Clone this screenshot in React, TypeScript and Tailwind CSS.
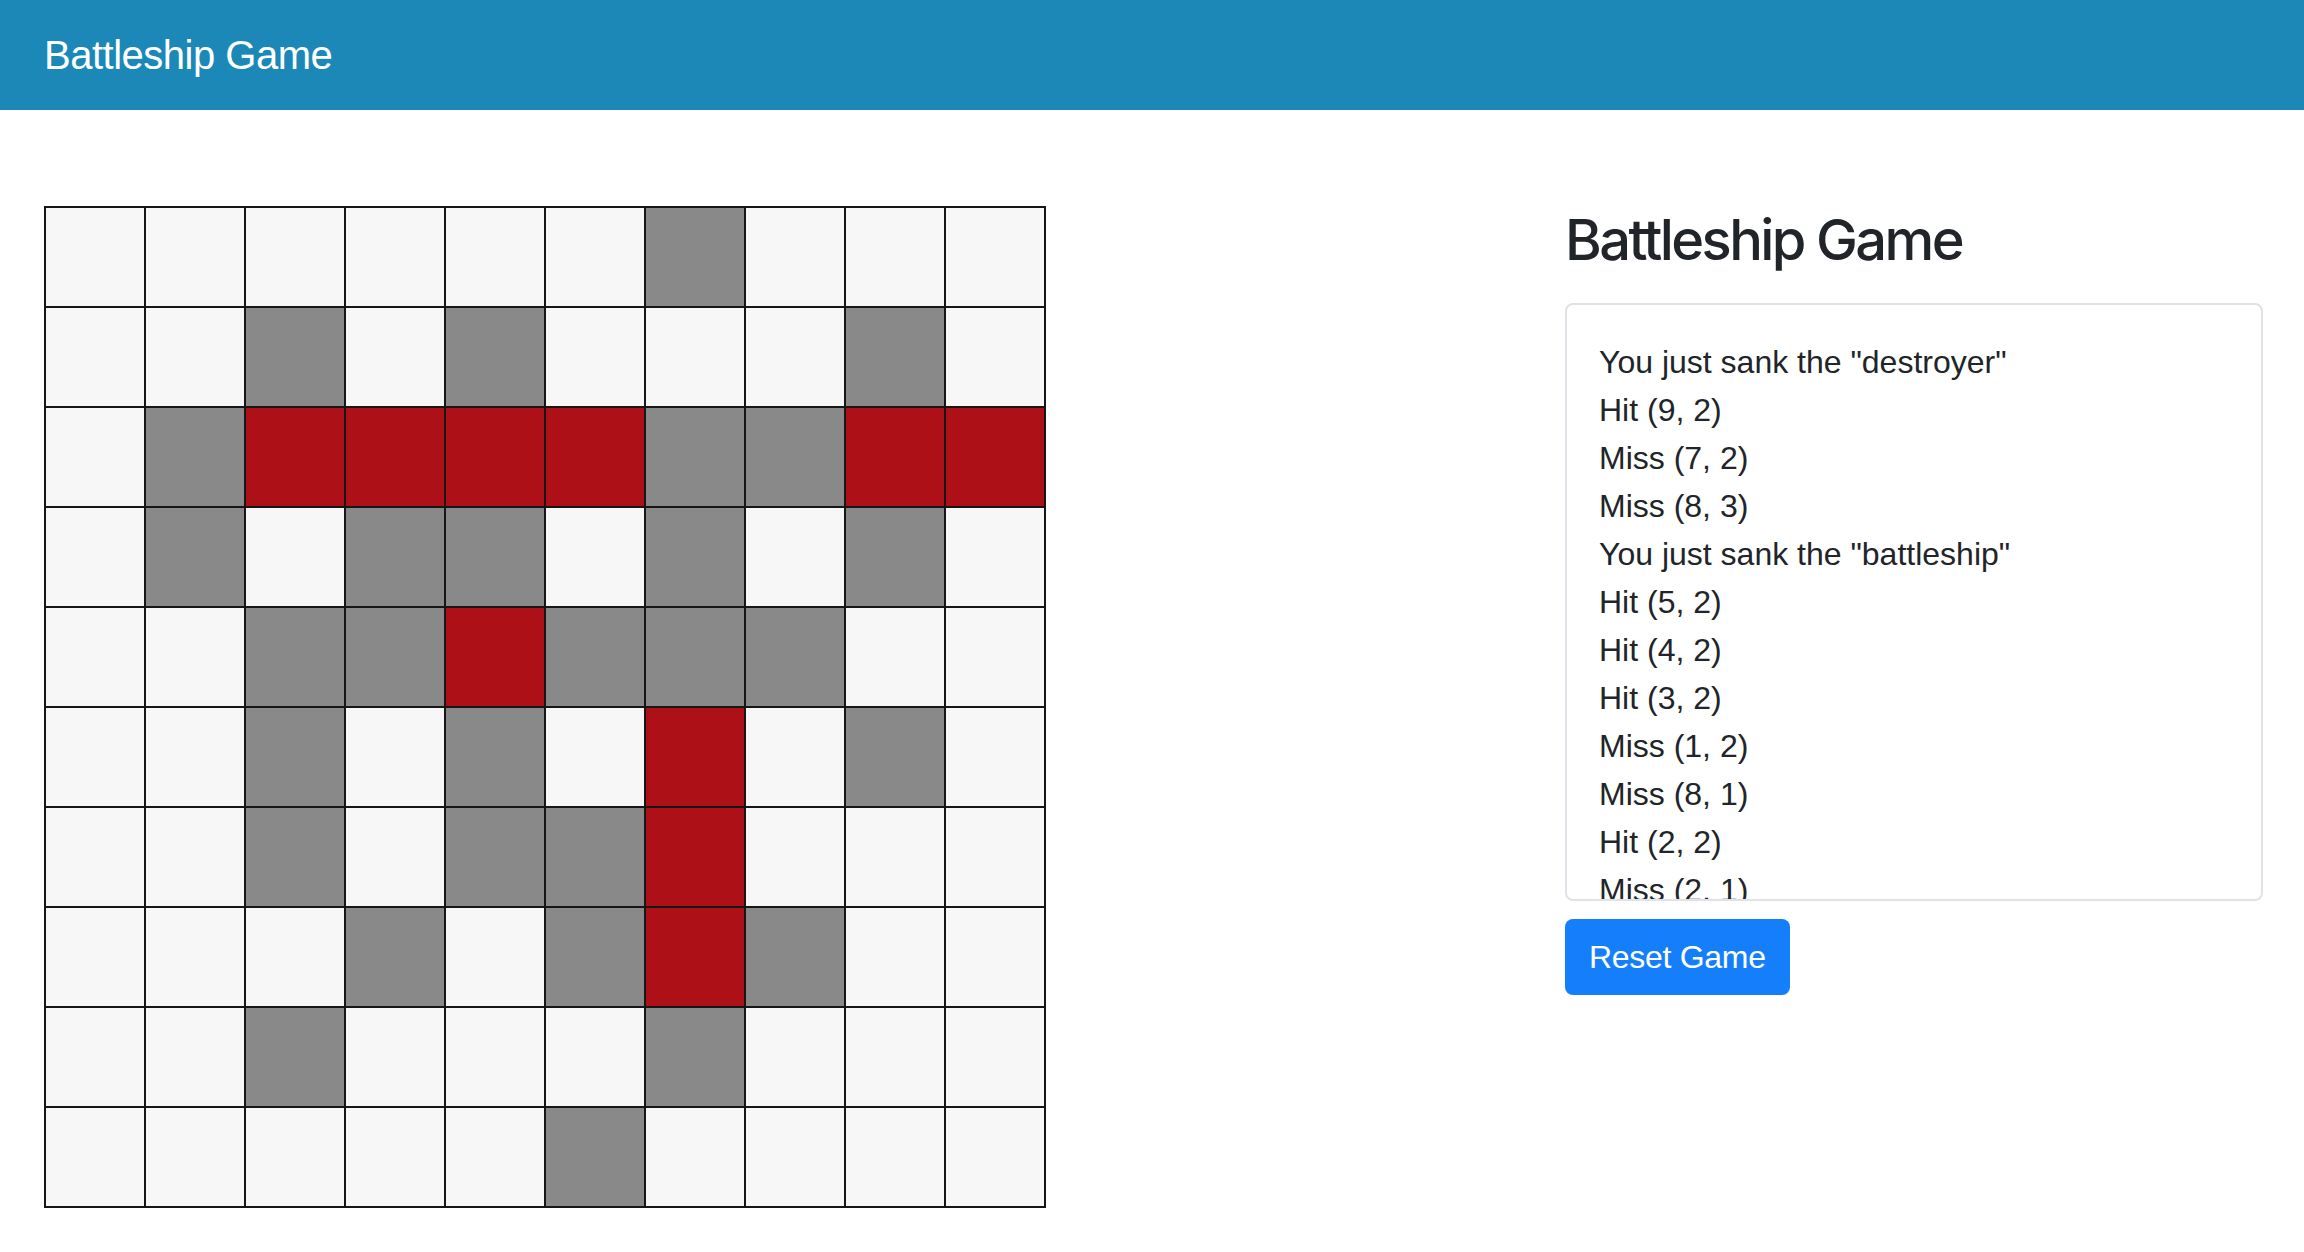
const board = [
  '......o...',
  '..o.o...o.',
  '.oxxxxooxx',
  '.o.oo.o.o.',
  '..ooxooo..',
  '..o.o.x.o.',
  '..o.oox...',
  '...o.oxo..',
  '..o...o...',
  '.....o....',
]

const log = [
  'You just sank the "destroyer"',
  'Hit (9, 2)',
  'Miss (7, 2)',
  'Miss (8, 3)',
  'You just sank the "battleship"',
  'Hit (5, 2)',
  'Hit (4, 2)',
  'Hit (3, 2)',
  'Miss (1, 2)',
  'Miss (8, 1)',
  'Hit (2, 2)',
  'Miss (2, 1)',
]

const cellColor = (c: string) => {
  if (c === 'x') return 'bg-[#ae1018]'
  if (c === 'o') return 'bg-[#898989]'
  return 'bg-[#f7f7f7]'
}

export default function App() {
  return (
    <div className="min-h-screen bg-white font-['Liberation_Sans',Arial,sans-serif] text-[#212529]">
      <nav className="flex h-[110px] items-center bg-[#1b88b7] pl-[44px]">
        <span className="text-[40px] leading-[60px] tracking-[-0.5px] text-white">
          Battleship Game
        </span>
      </nav>
      <main className="flex pl-[44px] pr-[41px] pt-[96px]">
        <div className="grid w-[1002px] grid-cols-10 gap-[2px] bg-[#161616] p-[2px]">
          {board.flatMap((row, r) =>
            row.split('').map((c, i) => (
              <div key={`${r}-${i}`} className={`h-[98px] w-[98px] ${cellColor(c)}`} />
            )),
          )}
        </div>
        <div className="ml-auto flex w-[698px] flex-col items-start">
          <h3 className="mb-[29px] mt-[1px] font-['Inter',sans-serif] text-[56px] font-medium leading-[67px] tracking-[-2.6px]">
            Battleship Game
          </h3>
          <div className="h-[598px] w-full overflow-hidden rounded-[8px] border-2 border-[#dfe2e6] px-[32px] pt-[33px]">
            {log.map((line, i) => (
              <div key={i} className="text-[32px] leading-[48px]">
                {line}
              </div>
            ))}
          </div>
          <button className="mt-[18px] h-[76px] rounded-[8px] bg-[#157ffb] px-[24px] text-[32px] leading-[48px] tracking-[-0.3px] text-white">
            Reset Game
          </button>
        </div>
      </main>
    </div>
  )
}
